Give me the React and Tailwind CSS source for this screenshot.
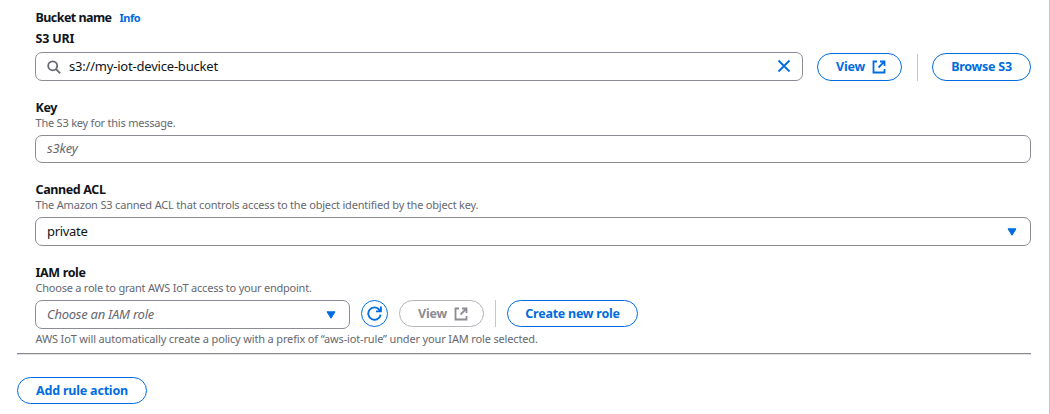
const LABEL = "block h-[18px] pl-[0.5px] text-[12.5px] leading-[18px] font-bold text-[#0f141a]";
const HINT = "h-[14px] pl-[0.5px] text-[11px] leading-[14px] text-[#656871]";
const FIELD = "flex items-center rounded-[7px] border border-[#8c8c94] bg-white";
const BUTTON =
  "flex shrink-0 items-center justify-center rounded-full border text-[12.5px] leading-[16px] font-bold tracking-[-0.25px] whitespace-nowrap";
const BLUE = "border-[#006ce0] text-[#006ce0]";

function ExternalIcon() {
  return (
    <svg className="h-[14px] w-[14px]" viewBox="0 0 14 14" fill="none" stroke="currentColor" strokeWidth="1.8">
      <path d="M5 1.5H1.5v11h11V9M8 1.5h4.5V6M12.3 1.7 6.5 7.5" />
    </svg>
  );
}

function Caret() {
  return (
    <svg className="h-2 w-[10px]" viewBox="0 0 10 8">
      <path d="M1 .8h8L5 7.2Z" fill="#006ce0" stroke="#006ce0" strokeLinejoin="round" />
    </svg>
  );
}

export default function App() {
  return (
    <div className="flex h-[414px] w-[1050px] flex-col overflow-hidden border-r border-[#c6c6cd] bg-white pr-[18px] pl-[17px] font-['Noto_Sans',sans-serif]">
      <div className="flex flex-col pl-[18px]">
        <div className="mt-[9px] flex h-[18px] items-center gap-[8px]">
          <span className={`${LABEL} tracking-[-0.55px]`}>Bucket name</span>
          <a className="text-[11px] leading-[18px] font-bold tracking-[-0.45px] text-[#006ce0]">Info</a>
        </div>
        <label className={`mt-[3px] tracking-[-0.2px] ${LABEL}`}>S3 URI</label>
        <div className="mt-[4px] flex h-[29px] items-end">
          <div className={`${FIELD} h-[29px] w-[768px] shrink-0 pr-[11px] pl-[11px]`}>
            <svg className="h-[14px] w-[14px] shrink-0" viewBox="0 0 14 14" fill="none" stroke="#656871" strokeWidth="1.8">
              <circle cx="5.7" cy="5.8" r="4.5" />
              <path d="m9 9.1 4.2 4.2" />
            </svg>
            <span className="ml-[8px] flex-1 pb-[2px] text-[13px] leading-[18px] tracking-[-0.2px] text-[#0f141a]">
              s3://my-iot-device-bucket
            </span>
            <svg className="mb-px h-[14px] w-[14px]" viewBox="0 0 14 14" fill="none" stroke="#006ce0" strokeWidth="1.8">
              <path d="m1.5 1.5 11 11m0-11-11 11" />
            </svg>
          </div>
          <button className={`${BUTTON} ${BLUE} ml-[14px] h-7 w-[85px] gap-[7px] pl-[3px]`}>
            <span className="pb-px">View</span>
            <ExternalIcon />
          </button>
          <div className="ml-[15px] h-[27px] w-px bg-[#c6c6cd]" />
          <button className={`${BUTTON} ${BLUE} ml-[14px] h-7 w-[99px]`}>
            <span className="pb-px">Browse S3</span>
          </button>
        </div>

        <label className={`mt-[18px] tracking-[-0.4px] ${LABEL}`}>Key</label>
        <p className={`-mt-px tracking-[-0.22px] ${HINT}`}>The S3 key for this message.</p>
        <div className={`${FIELD} mt-[5px] h-7 px-[11px] pb-[2px] text-[13px] leading-[18px] tracking-[-0.1px] text-[#656871] italic`}>
          s3key
        </div>

        <label className={`mt-[18px] tracking-[-0.38px] ${LABEL}`}>Canned ACL</label>
        <p className={`-mt-px tracking-[-0.185px] ${HINT}`}>
          The Amazon S3 canned ACL that controls access to the object identified by the object key.
        </p>
        <div className={`${FIELD} mt-[5px] h-[29px] justify-between pr-[13px] pl-[11px] text-[13px] leading-[18px] tracking-[-0.3px] text-[#0f141a]`}>
          <span className="pb-[2px]">private</span>
          <Caret />
        </div>

        <label className={`mt-[18px] tracking-[-0.35px] ${LABEL}`}>IAM role</label>
        <p className={`-mt-px tracking-[-0.23px] ${HINT}`}>Choose a role to grant AWS IoT access to your endpoint.</p>
        <div className="mt-[5px] flex h-[29px] items-start">
          <div className={`${FIELD} h-[29px] w-[315px] justify-between pr-[13px] pl-[11px] text-[13px] leading-[18px] tracking-[-0.25px] text-[#656871] italic`}>
            <span className="pb-[2px]">Choose an IAM role</span>
            <Caret />
          </div>
          <button className={`${BUTTON} ${BLUE} ml-[11px] h-[27px] w-[27px]`} aria-label="Refresh">
            <svg className="h-[15px] w-[15px] shrink-0" viewBox="0 0 15 15" fill="none" stroke="currentColor" strokeWidth="1.9">
              <path d="M13.6 8.6A6.2 6.2 0 1 1 12.4 3.8L13.5 5.2M13.9 .5v4.9H9" />
            </svg>
          </button>
          <button className={`${BUTTON} ml-[11px] h-[27px] w-[85px] gap-[7px] border-[#b4b4bb] pl-[3px] text-[#8c8c94]`}>
            <span>View</span>
            <ExternalIcon />
          </button>
          <div className="ml-[11px] h-[27px] w-px bg-[#c6c6cd]" />
          <button className={`${BUTTON} ${BLUE} ml-[11px] h-[27px] w-[131px]`}>
            <span>Create new role</span>
          </button>
        </div>
        <p className={`mt-[3px] tracking-[-0.155px] ${HINT}`}>
          AWS IoT will automatically create a policy with a prefix of “aws-iot-rule” under your IAM role selected.
        </p>
      </div>
      <hr className="mt-[7px] h-[2px] shrink-0 border-t border-b border-t-[#8c8c94] border-b-[#dedee3]" />
      <button className={`${BUTTON} ${BLUE} mt-[22px] h-[27px] w-[130px]`}>
        <span className="tracking-[-0.2px]">Add rule action</span>
      </button>
    </div>
  );
}
